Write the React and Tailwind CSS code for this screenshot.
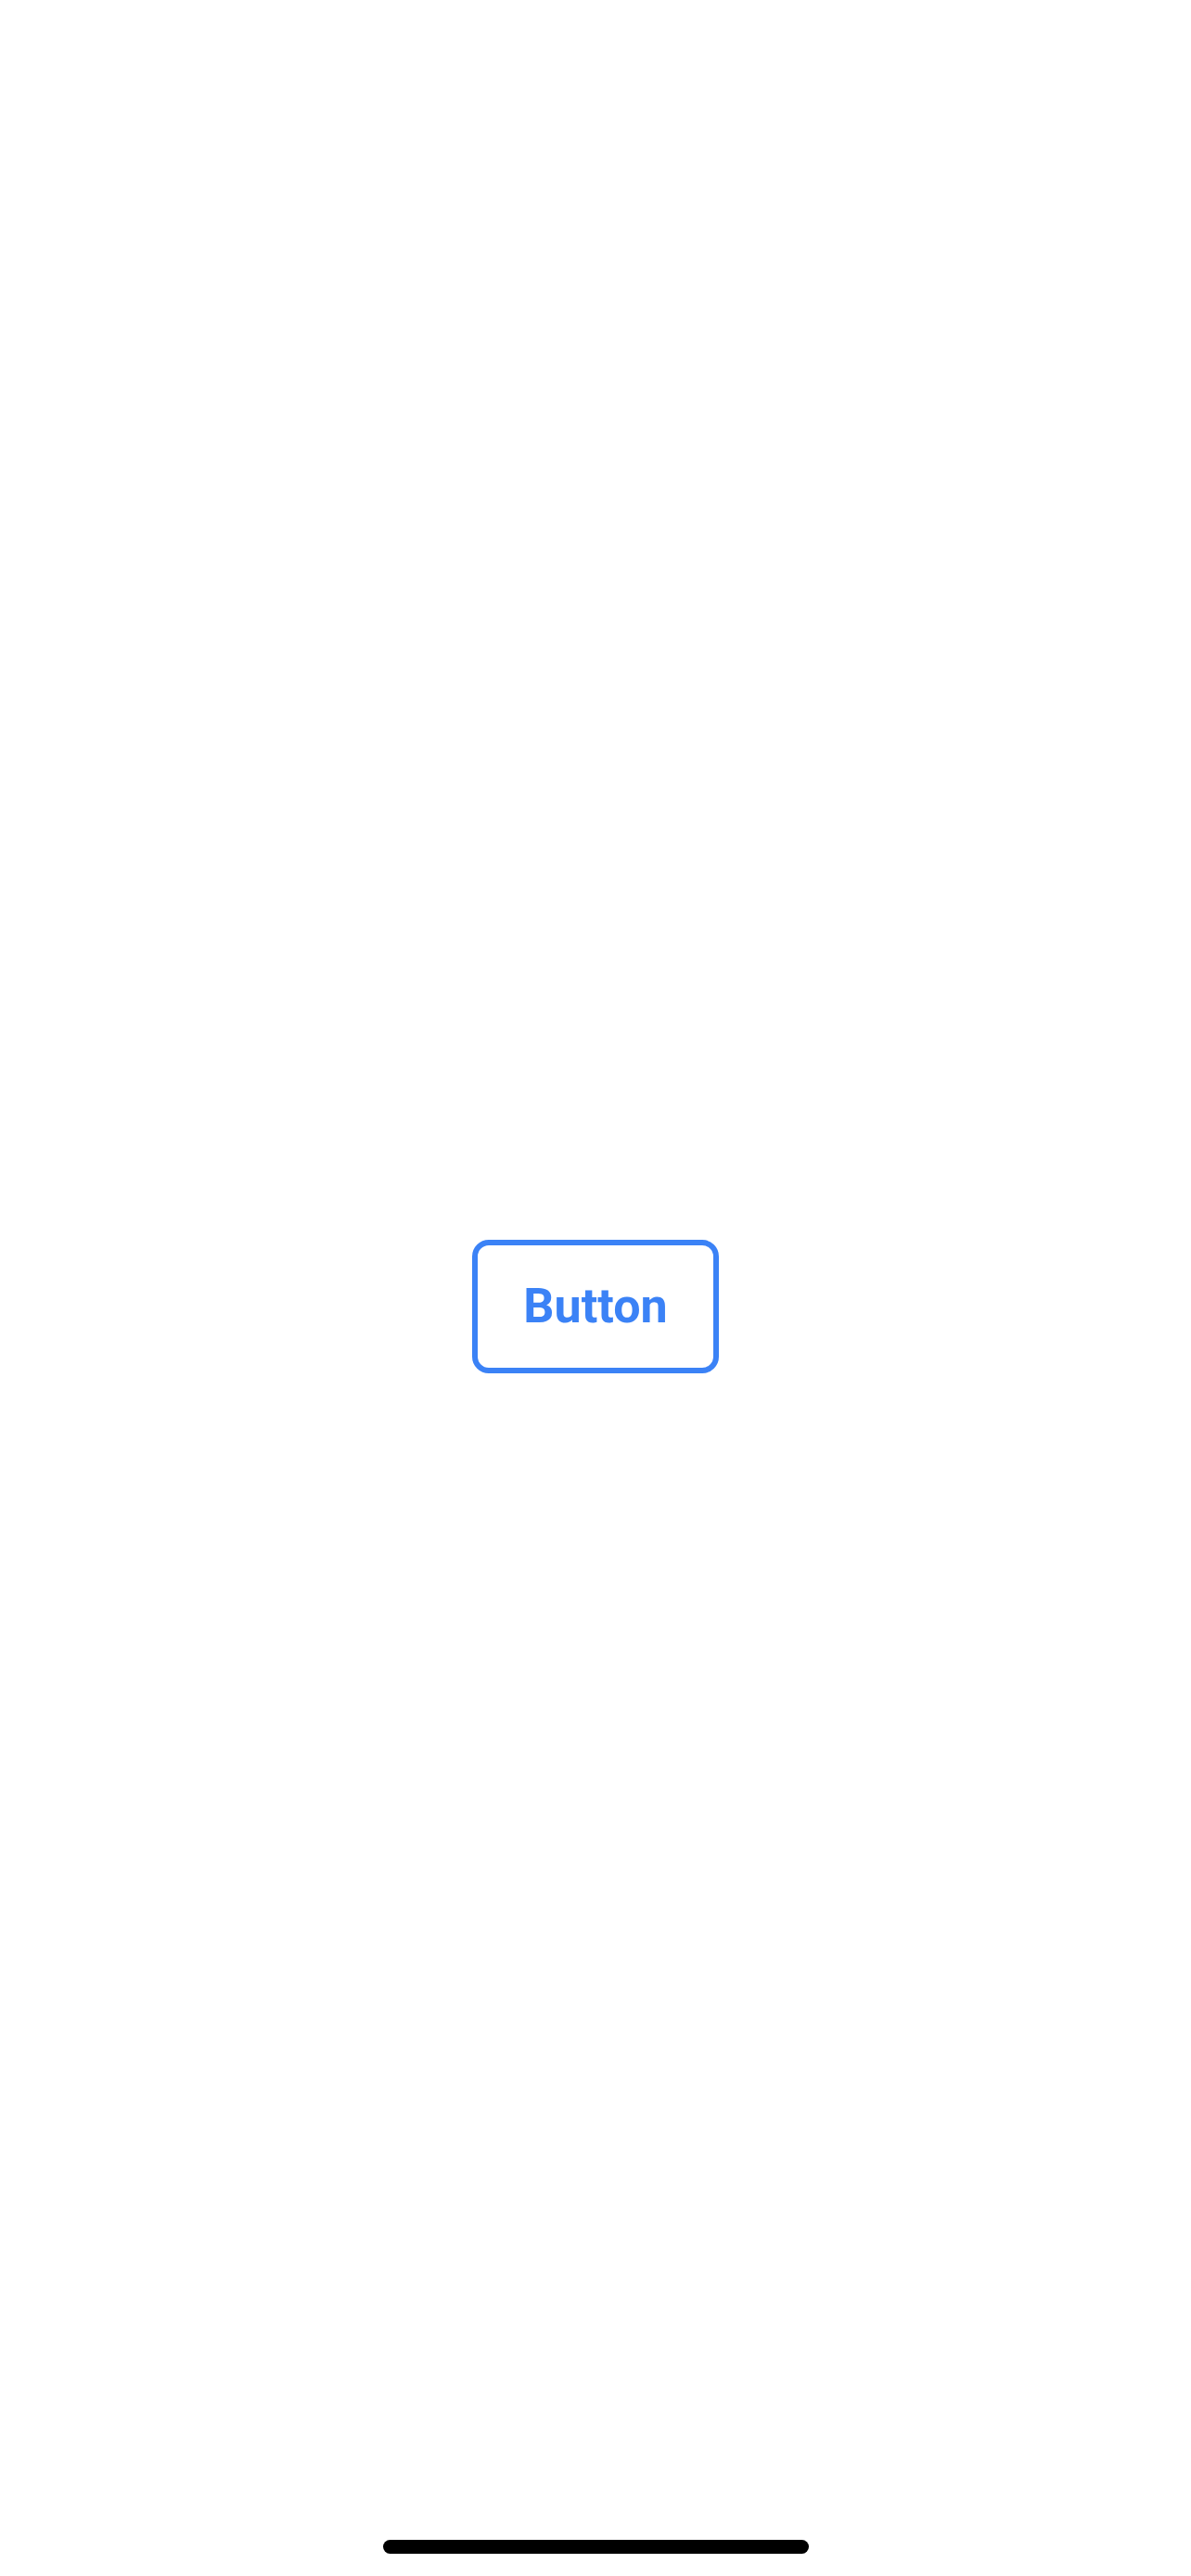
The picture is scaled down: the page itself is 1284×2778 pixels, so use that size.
export default function App() {
  return (
    <div className="flex h-[2778px] w-full flex-col bg-white font-['Roboto','Liberation_Sans',sans-serif]">
      <main className="flex flex-1 items-center justify-center pt-[79px]">
        <button className="flex h-[144px] w-[266px] items-center justify-center rounded-[18px] border-[6px] border-[#3b82f6] bg-white text-[52px] font-bold leading-none text-[#3b82f6]">
          Button
        </button>
      </main>
      <div className="flex justify-center pb-[24px]">
        <div className="h-[15px] w-[459px] rounded-full bg-black" />
      </div>
    </div>
  );
}
